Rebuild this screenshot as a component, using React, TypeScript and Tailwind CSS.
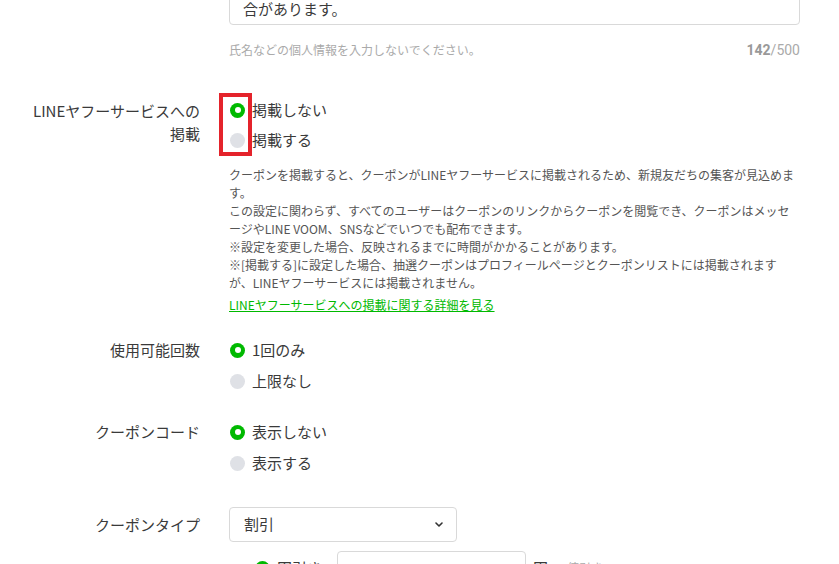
import React from "react";

const jp = { fontFamily: '"Noto Sans CJK JP", "Noto Sans", sans-serif' };

function Radio({ checked }: { checked: boolean }) {
  return checked ? (
    <span className="w-[15px] h-[15px] rounded-full bg-[#00b900] flex items-center justify-center shrink-0">
      <span className="w-[6px] h-[6px] rounded-full bg-white" />
    </span>
  ) : (
    <span className="w-[15px] h-[15px] rounded-full bg-[#dfe1e6] shrink-0" />
  );
}

function Option({ label, checked }: { label: string; checked: boolean }) {
  return (
    <div className="h-[24px] flex items-center gap-[7px] ml-px">
      <Radio checked={checked} />
      <span className="text-[15px] text-[#3a3a3a] leading-[24px]">{label}</span>
    </div>
  );
}

function Row({
  label,
  className,
  children,
}: {
  label?: React.ReactNode;
  className?: string;
  children: React.ReactNode;
}) {
  return (
    <div className={"flex items-start " + (className ?? "")}>
      <div className="w-[200px] shrink-0 text-right text-[15px] leading-[24px] text-[#3a3a3a]">
        {label}
      </div>
      <div className="ml-[29px] w-[571px]">{children}</div>
    </div>
  );
}

const notes = [
  "クーポンを掲載すると、クーポンがLINEヤフーサービスに掲載されるため、新規友だちの集客が見込めま",
  "す。",
  "この設定に関わらず、すべてのユーザーはクーポンのリンクからクーポンを閲覧でき、クーポンはメッセ",
  "ージやLINE VOOM、SNSなどでいつでも配布できます。",
  "※設定を変更した場合、反映されるまでに時間がかかることがあります。",
  "※[掲載する]に設定した場合、抽選クーポンはプロフィールページとクーポンリストには掲載されます",
  "が、LINEヤフーサービスには掲載されません。",
];

export default function App() {
  return (
    <div className="relative w-[839px] h-[564px] overflow-hidden bg-white" style={jp}>
      {/* message textarea (scrolled) */}
      <Row>
        <div className="-mt-[12px] border border-[#d9d9d9] rounded-[4px] pt-[9px] pb-[4px] pl-[13px] text-[15px] leading-[22px] text-[#3a3a3a]">
          合があります。
        </div>
        <div className="mt-[16px] flex items-center justify-between h-[18px]">
          <span className="text-[12px] text-[#aaa]">氏名などの個人情報を入力しないでください。</span>
          <span className="text-[14px] text-[#aaa]" style={{ fontFamily: "Roboto, sans-serif" }}>
            <span className="font-bold text-[#999]">142</span>/500
          </span>
        </div>
      </Row>

      <Row
        className="mt-[39px]"
        label={
          <div className="leading-[23px] pt-px">
            LINEヤフーサービスへの
            <br />
            掲載
          </div>
        }
      >
        <div className="flex flex-col gap-[6px]">
          <Option label="掲載しない" checked />
          <Option label="掲載する" checked={false} />
        </div>
        <div className="mt-[14px] text-[12px] leading-[18px] text-[#555]">
          {notes.map((n) => (
            <div key={n} className="whitespace-nowrap">
              {n}
            </div>
          ))}
        </div>
        <a href="#" className="block mt-[4px] text-[12px] leading-[18px] text-[#00b900] underline">
          LINEヤフーサービスへの掲載に関する詳細を見る
        </a>
      </Row>

      <Row className="mt-[24px]" label="使用可能回数">
        <div className="flex flex-col gap-[7px]">
          <Option label="1回のみ" checked />
          <Option label="上限なし" checked={false} />
        </div>
      </Row>

      <Row className="mt-[27px]" label="クーポンコード">
        <div className="flex flex-col gap-[7px]">
          <Option label="表示しない" checked />
          <Option label="表示する" checked={false} />
        </div>
      </Row>

      <Row className="mt-[32px]" label={<div className="leading-[35px]">クーポンタイプ</div>}>
        <div className="w-[228px] h-[35px] border border-[#d9d9d9] rounded-[4px] flex items-center justify-between pl-[14px] pr-[13px]">
          <span className="text-[15px] text-[#3a3a3a]">割引</span>
          <svg width="8" height="5" viewBox="0 0 8 5" fill="none">
            <path d="M1 1l3 3 3-3" stroke="#333" strokeWidth="1.6" strokeLinecap="round" strokeLinejoin="round" />
          </svg>
        </div>
        <div className="mt-[9px] pl-[26px] h-[34px] flex items-center">
          <Radio checked />
          <span className="ml-[7px] text-[15px] text-[#3a3a3a]">円引き</span>
          <div className="ml-[15px] w-[189px] h-[34px] border border-[#d9d9d9] rounded-[4px] flex items-center pl-[13px] text-[14px] text-[#c0c0c0]">
            100
          </div>
          <span className="ml-[7px] text-[15px] text-[#3a3a3a]">円</span>
          <span className="ml-[7px] text-[12px] text-[#aaa]">の値引き</span>
        </div>
      </Row>

      {/* annotation */}
      <div className="absolute left-[219px] top-[93px] w-[33px] h-[63px] border-[4px] border-[#e4232b]" />
    </div>
  );
}
